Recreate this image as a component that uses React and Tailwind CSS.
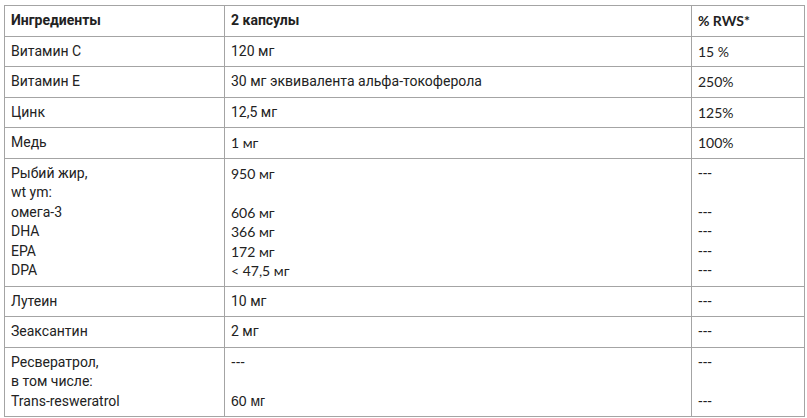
const rows = [
  { a: ['Витамин C'], b: ['120 мг'], c: ['15 %'] },
  { a: ['Витамин E'], b: ['30 мг эквивалента альфа-токоферола'], c: ['250%'] },
  { a: ['Цинк'], b: ['12,5 мг'], c: ['125%'] },
  { a: ['Медь'], b: ['1 мг'], c: ['100%'], bLato: true },
  {
    a: ['Рыбий жир,', 'wt ym:', 'омега-3', 'DHA', 'EPA', 'DPA'],
    b: ['950 мг', '', '606 мг', '366 мг', '172 мг', '< 47,5 мг'],
    c: ['---', '', '---', '---', '---', '---'],
    bLato: true,
  },
  { a: ['Лутеин'], b: ['10 мг'], c: ['---'] },
  { a: ['Зеаксантин'], b: ['2 мг'], c: ['---'] },
  {
    a: ['Ресвератрол,', 'в том числе:', 'Trans-resweratrol'],
    b: ['---', '', '60 мг'],
    c: ['---', '', '---'],
  },
];

const fonts = {
  roboto: 'font-[family-name:Roboto,Liberation_Sans,sans-serif]',
  lato: 'font-[family-name:Lato,sans-serif]',
  dash: 'font-[family-name:Liberation_Sans,Arial,sans-serif]',
};

function Cell({ items, font }) {
  return (
    <td className="border border-[#a4a4a4] px-[6px] py-[5px] align-top">
      <div className={fonts[font]}>
        {items.map((t, i) => (
          <div key={i} className="h-[19.5px] leading-[19.5px] whitespace-nowrap">
            {t || '\u00a0'}
          </div>
        ))}
      </div>
    </td>
  );
}

function Head({ children, font }) {
  return (
    <th className="border border-[#a4a4a4] px-[6px] py-[5px] text-left font-bold">
      <div className={`h-[19.5px] leading-[19.5px] ${fonts[font]}`}>{children}</div>
    </th>
  );
}

export default function App() {
  return (
    <div className="w-[807px] h-[418px] overflow-hidden bg-white pl-[4px] pt-[5px] text-[14px] text-[#222] font-[family-name:Roboto,sans-serif]">
      <table className="border-collapse table-fixed w-[800px]">
        <colgroup>
          <col className="w-[220px]" />
          <col className="w-[467px]" />
          <col className="w-[113px]" />
        </colgroup>
        <thead>
          <tr>
            <Head font="roboto">Ингредиенты</Head>
            <Head font="roboto">2 капсулы</Head>
            <Head font="lato">% RWS*</Head>
          </tr>
        </thead>
        <tbody>
          {rows.map((r, i) => (
            <tr key={i}>
              <Cell items={r.a} font="roboto" />
              <Cell items={r.b} font={r.bLato ? 'lato' : r.b[0] === '---' ? 'dash' : 'roboto'} />
              <Cell items={r.c} font={r.c[0] === '---' ? 'dash' : 'lato'} />
            </tr>
          ))}
        </tbody>
      </table>
    </div>
  );
}
